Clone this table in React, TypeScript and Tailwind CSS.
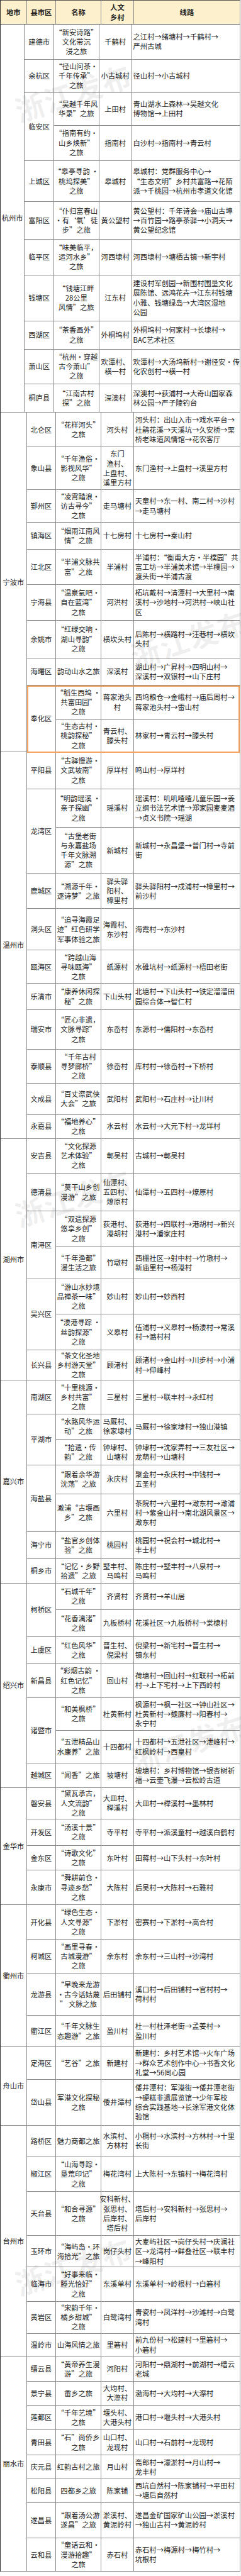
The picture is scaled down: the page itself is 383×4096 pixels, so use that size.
import React from "react";

const S = 0.598;

// name | village | route (lines split by "|"), bottom edge of the row in reference px
type Row = [string, string, string, number];
type District = [string, Row[]];
type City = [string, District[]];

const data: City[] = [
  ["杭州市", [
    ["建德市", [["“新安诗路”|文化带沉|浸之旅", "千鹤村", "之江村→绪塘村→千鹤村→|严州古城", 158.1]]],
    ["余杭区", [["“径山问茶·|千年传承”|之旅", "小古城村", "径山村→小古城村", 247.2]]],
    ["临安区", [
      ["“吴越千年风|华录”之旅", "上田村", "青山湖水上森林→吴越文化|博物馆→上田村", 333.7],
      ["“指南有约·|山乡焕新”|之旅", "指南村", "白沙村→指南村→青云村", 428.2],
    ]],
    ["上城区", [["“皋亭寻韵 ·|桃坞探美”|之旅", "皋城村", "皋城村：党群服务中心→|“生态文明”乡村共富路→花陌|派→千桃园→杭州市孝道文化馆", 537.3]]],
    ["富阳区", [["“仆归富春山|·有‘氧’徒|步”之旅", "黄公望村", "黄公望村：千年诗会→庙山古埠|→百竹园→路亭茶驿→小洞天→|黄公望纪念馆", 637.3]]],
    ["临平区", [["“味美临平，|运河水乡”|之旅", "河西埭村", "河西埭村→塘栖古镇→新宇村", 731.8]]],
    ["钱塘区", [["“钱塘江畔|28公里|风情”之旅", "江东村", "建设村军创园→新围村围垦文化|展陈馆、远鸿花卉→江东村钱塘|小雅、钱塘绿岛→大湾区湿地|公园", 854.3]]],
    ["西湖区", [["“茶香画外”|之旅", "外桐坞村", "外桐坞村→何家村→长埭村→|BAC艺术社区", 929.2]]],
    ["萧山区", [["“杭州·穿越|古今萧山”|之旅", "欢潭村、|横一村", "欢潭村→大汤坞新村→谢径安·传|化农创村→横一村", 1021.9]]],
    ["桐庐县", [["“江南古村|探”之旅", "深澳村", "深澳村→荻浦村→大奇山国家森|林公园→严子陵钓台", 1097.1]]],
  ]],
  ["宁波市", [
    ["北仑区", [["“花样河头”|之旅", "河头村", "河头村：出山入市→戏水平台→|杜鹃花溪→天溪坑→久安桥→栗|桥老味道风情馆→花农客厅", 1189.8]]],
    ["象山县", [["“千年渔俗·|影视风华”|之旅", "东门|渔村、|上盘村、|溪里方村", "东门渔村→上盘村→溪里方村", 1302.9]]],
    ["鄞州区", [["“凌霄踏浪·|访古寻今”|之旅", "走马塘村", "天童村→东一村、南二村→沙村|→走马塘村", 1390.1]]],
    ["镇海区", [["“烟雨江南风|情”之旅", "十七房村", "十七房村→秦山村", 1461.4]]],
    ["江北区", [["“半浦文脉共|富”之旅", "半浦村", "半浦村：“衡甫大方·半樸园”共|富工坊→半浦美术馆→半樸园→|渡头街→半浦古渡", 1556.2]]],
    ["宁海县", [["“温泉氧吧·|自在蓝湾”|之旅", "河洪村", "柘坑戴村→清潭村→大里村→南|溪村→沙地村→河洪村→峡山社|区", 1650]]],
    ["余姚市", [["“红绿交响·|湖山寻韵”|之旅", "横坎头村", "后陈村→横路村→汪巷村→横坎|头村", 1750.7]]],
    ["海曙区", [["韵动山水之旅", "深溪村", "湖山村→广昇村→四明山村→|深溪村→双银村→山下庄村", 1822.7]]],
    ["奉化区", [
      ["“稻生西坞 ·|共富田园”|之旅", "蒋家池头|村", "西坞粮仓→金峨村→庙后周村→|蒋家池头村→雷山村", 1914.3],
      ["“生态古村·|桃韵探秘”|之旅", "青云村、|滕头村", "林家村→青云村→滕头村", 2000.8],
    ]],
  ]],
  ["温州市", [
    ["平阳县", [["“古驿慢游·|文武坡南”|之旅", "厚垟村", "鸣山村→厚垟村", 2098.2]]],
    ["龙湾区", [
      ["“明韵瑶溪 ·|亲子探幽”|之旅", "瑶溪村", "瑶溪村：叽叽喳喳儿童乐园→姜|立纲书法艺术馆→郑家园麦麦酒|→贞义书院→瑶湖", 2201.5],
      ["“古堡老街|与永嘉盐场|千年文脉溯|源”之旅", "新城村", "新城村→永昌堡→普门村→寺前|街", 2323.6],
    ]],
    ["鹿城区", [["“溯源千年·|逐诗梦”之旅", "驿头驿|阳村、|樟里村", "驿头驿阳村→戍浦村→樟里村→|前沙村", 2417.4]]],
    ["洞头区", [["“追寻海霞足|迹”红色研学|军事体验之旅", "海霞村、|东沙村", "海霞村→东沙村", 2527.9]]],
    ["瓯海区", [["“跨越山海|寻味瓯海”|之旅", "纸源村", "水碓坑村→纸源村→梧田老街", 2616.6]]],
    ["乐清市", [["“康养休闲探|秘”之旅", "下山头村", "北塘村→下山头村→铁定溜溜田|园综合体→智仁村", 2685.3]]],
    ["瑞安市", [["“匠心非遗，|文脉寻踪”|之旅", "东岙村", "东源村→儒阳村→东岙村", 2791.8]]],
    ["泰顺县", [["“千年古村|寻梦廊桥”|之旅", "徐岙村", "库村村→徐岙村→下桥村", 2882]]],
    ["文成县", [["“百丈漈武侠|大会”之旅", "武阳村", "武阳村→石庄村→让川村", 2964.5]]],
    ["永嘉县", [["“福地养心”|之旅", "水云村", "水云村→大元下村→龙垟村", 3028.1]]],
  ]],
  ["湖州市", [
    ["安吉县", [["“文化探源|艺术体验”|之旅", "鄣吴村", "古城村→鄣吴村", 3120.8]]],
    ["德清县", [["“莫干山乡创|漫游”之旅", "仙潭村、|五四村、|燎原村", "仙潭村→五四村→燎原村", 3221.5]]],
    ["南浔区", [
      ["“双遗探源|悠享乡创”|之旅", "荻港村、|港胡村", "荻港村→四联村→港胡村→新兴|港村→潘家庄村", 3316.4],
      ["“千年渔都”|漫生活之旅", "竹墩村", "西栅社区→射中村→竹墩村→|新庙里村→杨港村", 3401.8],
    ]],
    ["吴兴区", [
      ["“游山水妙境|品禅茶一味”|之旅", "妙山村", "妙山村→妙西村", 3496.3],
      ["“溇港寻踪 ·|丝韵探源”|之旅", "义皋村", "伍浦村→义皋村→杨溇村→常溪|村→潞村村", 3590.8],
    ]],
    ["长兴县", [["“茶文化圣地|乡村游天堂”|之旅", "顾渚村", "顾渚村→金山村→川步村→小浦|村→仰峰村", 3671.5]]],
  ]],
  ["嘉兴市", [
    ["南湖区", [["“十里桃源·|乡村共富”|之旅", "三星村", "三星村→联丰村→永红村", 3760.6]]],
    ["平湖市", [
      ["“水路风华运|动”之旅", "马厩村、|徐家埭村", "马厩村→徐家埭村→独山港镇", 3828.2],
      ["“拾遗·传|韵”之旅", "钟埭村、|山塘村", "钟埭村→沈家弄村→三友社区→|龙萌村→山塘村", 3896.2],
    ]],
    ["海盐县", [
      ["“跟着余华游|沈荡”之旅", "永庆村", "聚金村→永庆村→中钱村→|五圣村", 3973.2],
      ["澉浦“古堰画|乡”之旅", "六里村", "茶院村→六里村→澉东村→澉浦|村→紫金山村→南北湖风景区→|澉东村", 4074.3],
    ]],
    ["海宁市", [["“盐官乡创体|验”之旅", "桃园村", "桃园村→祝会村→城北村→|丰士村", 4146.3]]],
    ["桐乡市", [["“记忆·乡野|拾遗”之旅", "墅丰村、|马鸣村", "陈庄村→墅丰村→八泉村→|马鸣村", 4211]]],
  ]],
  ["绍兴市", [
    ["柯桥区", [
      ["“石城千年”|之旅", "齐贤村", "齐贤村→羊山居", 4280.8],
      ["“花香漓渚”|之旅", "九板桥村", "花溪社区→九板桥村→棠棣村", 4353.5],
    ]],
    ["上虞区", [["“红色风华”|之旅", "晋生村、|倪梁村", "倪梁村→新宅村→晋生村→|镇东村", 4424.7]]],
    ["新昌县", [["“彩烟古韵 ·|红色记忆”|之旅", "回山村", "荷塘村→回山村→红联村→柘前|村→上下宅村→上下西岭村", 4515.3]]],
    ["诸暨市", [
      ["“和美枫桥”|之旅", "杜黄新村", "枫源村→枫一社区→钟山社区→|杜黄新村→魏廉村→阳春村→|永宁村", 4602.9],
      ["“五泄精品山|水康养”之旅", "十四都村", "十四都村→五泄社区→泄峰村→|红枫岭村→西皇村", 4690.1],
    ]],
    ["越城区", [["“闻香”之旅", "坡塘村", "坡塘村：乡村博物馆→银杏树祈|福→云壶飞瀑→云松岭古道", 4754.5]]],
  ]],
  ["金华市", [
    ["磐安县", [["“黛瓦承古，|人文流韵”|之旅", "大皿村、|榉溪村", "大皿村→榉溪村→墨林村", 4838.1]]],
    ["开发区", [["“汤溪十景”|之旅", "寺平村", "寺平村→派溪童村→越溪白鹤村", 4909]]],
    ["金东区", [["“诗歌文化”|之旅", "东叶村", "田蒋村→山下头村→东叶村", 4974.4]]],
    ["永康市", [["“舜耕前仓·|寻迹乡愁”|之旅", "大陈村", "后吴村→大陈村→石雅村", 5066]]],
  ]],
  ["衢州市", [
    ["开化县", [["“绿色生态·|人文寻源”|之旅", "下淤村", "密赛村→下淤村→高合村", 5158.4]]],
    ["柯城区", [["“画里寻春·|古城漫游”|之旅", "余东村", "余东村→三山村→沙湾村", 5248.1]]],
    ["龙游县", [["“早晚来龙游|·古今话姑蔑|” 文脉之旅", "后田铺村", "溪口村→后田铺村→官村村→|荷村村", 5361.2]]],
    ["衢江区", [["“千年文脉生|态趣游”之旅", "盈川村", "杜一村杜泽老街→孟姜村→|盈川村", 5443.4]]],
  ]],
  ["舟山市", [
    ["定海区", [["“艺谷”之旅", "新建村", "新建村：乡村艺术馆→火车广场|→群众艺术创作中心→书香文化|礼堂→56同心园", 5530.6]]],
    ["岱山县", [["军港文化探秘|之旅", "倭井潭村", "倭井潭村：军港街→倭井潭老街|→硬糕非遗展览馆→少年军校|综合实践基地→长涂军港文化体|验馆", 5652.7]]],
  ]],
  ["台州市", [
    ["路桥区", [["魅力商都之旅", "水滨村、|方林村", "小稠村→水滨村→方林村→十里|长街", 5736.4]]],
    ["椒江区", [["“山海寻踪·|垦荒印记”|之旅", "梅花湾村", "上大陈村→东镇村→梅花湾村", 5829]]],
    ["天台县", [["“和合寻源”|之旅", "安科新村、|张思村、|后岸村、|塔后村", "塔后村→安科新村→张思村→|后岸村", 5946.5]]],
    ["玉环市", [["“海屿岛·环|海拾光”之旅", "岗仔头村", "大麦屿社区→岗仔头村→庆澜社|区→龙湾村→鲜叠社区→联丰村|→峰阳村", 6030]]],
    ["临海市", [["“好事来临·|塍光恰好”|之旅", "东溪单村", "东溪单村→岭根村→白箬村", 6121]]],
    ["黄岩区", [["“宋韵千年·|橘乡甜城”|之旅", "白鹭湾村", "青瓷村→凤洋村→沙滩村→白鹭|湾村", 6206]]],
    ["温岭市", [["山海风情之旅", "里箬村", "前九份村→松建村→里箬村→|小箬村", 6267.8]]],
  ]],
  ["丽水市", [
    ["缙云县", [["“黄帝养生漫|游”之旅", "河阳村", "河阳村→鼎湖村→前湖村→缙云|老城", 6333.6]]],
    ["景宁县", [["畲乡之旅", "大均村、|大漈村", "渤海村→大均村→大漈村", 6396.5]]],
    ["莲都区", [["“千年艺境”|之旅", "堰头村、|大港头村", "港口村→堰头村→大港头村", 6462.7]]],
    ["青田县", [["“石”尚侨乡|之旅", "山口村、|龙现村", "山口村→石前村→龙现村", 6529.9]]],
    ["庆元县", [["红韵古村之旅", "月山村", "斋郎村→濛淤村→月山村→|龙丰村", 6593.5]]],
    ["松阳县", [["四都乡之旅", "陈家铺", "西坑自然村→陈家铺村→平田村|→塘后自然村", 6656]]],
    ["遂昌县", [["“跟着汤公游|遂昌”之旅", "淤溪村、|黄泥岭村", "遂昌金矿国家矿山公园→淤溪村|→独山古村→黄泥岭村", 6750.6]]],
    ["云和县", [["“童话云和·|漫游拾趣”|之旅", "赤石村", "赤石村→梅源村→梅竹村→|坑根村", 6839]]],
  ]],
];

// row heights from the reference's row edges
const heights = new Map<Row, number>();
let prev = 65.4;
data.forEach(([, ds]) =>
  ds.forEach(([, rows]) =>
    rows.forEach((r) => {
      heights.set(r, (r[3] - prev) * S);
      prev = r[3];
    })
  )
);

function Lines({ t }: { t: string }) {
  return (
    <>
      {t.split("|").map((l, i) => (
        <div key={i} className="whitespace-nowrap">
          {l}
        </div>
      ))}
    </>
  );
}

const cell = "flex flex-col justify-center border-r border-b border-[#8a8a8a]";

function Watermark({ className }: { className: string }) {
  return (
    <div
      className={`pointer-events-none absolute -translate-x-1/2 -translate-y-1/2 -rotate-[18deg] whitespace-nowrap text-[46px] font-bold leading-none tracking-[2px] text-black/[0.07] ${className}`}
    >
      浙江发布
    </div>
  );
}

export default function App() {
  return (
    <div className="w-[383px] bg-white font-['Noto_Sans_CJK_SC','Noto_Sans',sans-serif] text-[11.3px] leading-[15.2px] text-[#222]">
      <div className="relative w-[382px] border-l border-[#333]">
        {/* header */}
        <div className="flex h-[39.1px] border-t border-[#555] bg-[#fdf0cc] font-bold">
          <div className={`${cell} w-[41.7px] items-center border-b-[#555]`}>地市</div>
          <div className={`${cell} w-[46.4px] items-center border-b-[#555]`}>县市区</div>
          <div className={`${cell} w-[72px] items-center border-b-[#555]`}>名称</div>
          <div className={`${cell} w-[51.7px] items-center border-b-[#555]`}>
            <div>人文</div>
            <div>乡村</div>
          </div>
          <div className={`${cell} flex-1 items-center border-b-[#555]`}>线路</div>
        </div>

        {data.map(([city, ds]) => (
          <div key={city} className="flex">
            <div className={`${cell} w-[41.7px] items-center`}>{city}</div>
            <div className="flex flex-1 flex-col">
              {ds.map(([d, rows]) => (
                <div key={d} className="flex">
                  <div className={`${cell} w-[46.4px] items-center`}>{d}</div>
                  <div className="flex flex-1 flex-col">
                    {rows.map((r) => (
                      <div key={r[0]} className="flex" style={{ height: heights.get(r) }}>
                        <div className={`${cell} w-[72px] items-center`}>
                          <Lines t={r[0]} />
                        </div>
                        <div className={`${cell} w-[51.7px] items-center`}>
                          <Lines t={r[1]} />
                        </div>
                        <div className={`${cell} flex-1 items-start pl-[2px]`}>
                          <Lines t={r[2]} />
                        </div>
                      </div>
                    ))}
                  </div>
                </div>
              ))}
            </div>
          </div>
        ))}

        {/* highlighted 奉化区 block */}
        <div className="pointer-events-none absolute left-[42.4px] top-[1090px] h-[106.5px] w-[337.3px] border-2 border-[#f5a25e]" />

        <Watermark className="left-[115px] top-[146px]" />
        <Watermark className="left-[299px] top-[1014px]" />
        <Watermark className="left-[115px] top-[1903px]" />
        <Watermark className="left-[299px] top-[2769px]" />
        <Watermark className="left-[115px] top-[3602px]" />
      </div>
    </div>
  );
}
